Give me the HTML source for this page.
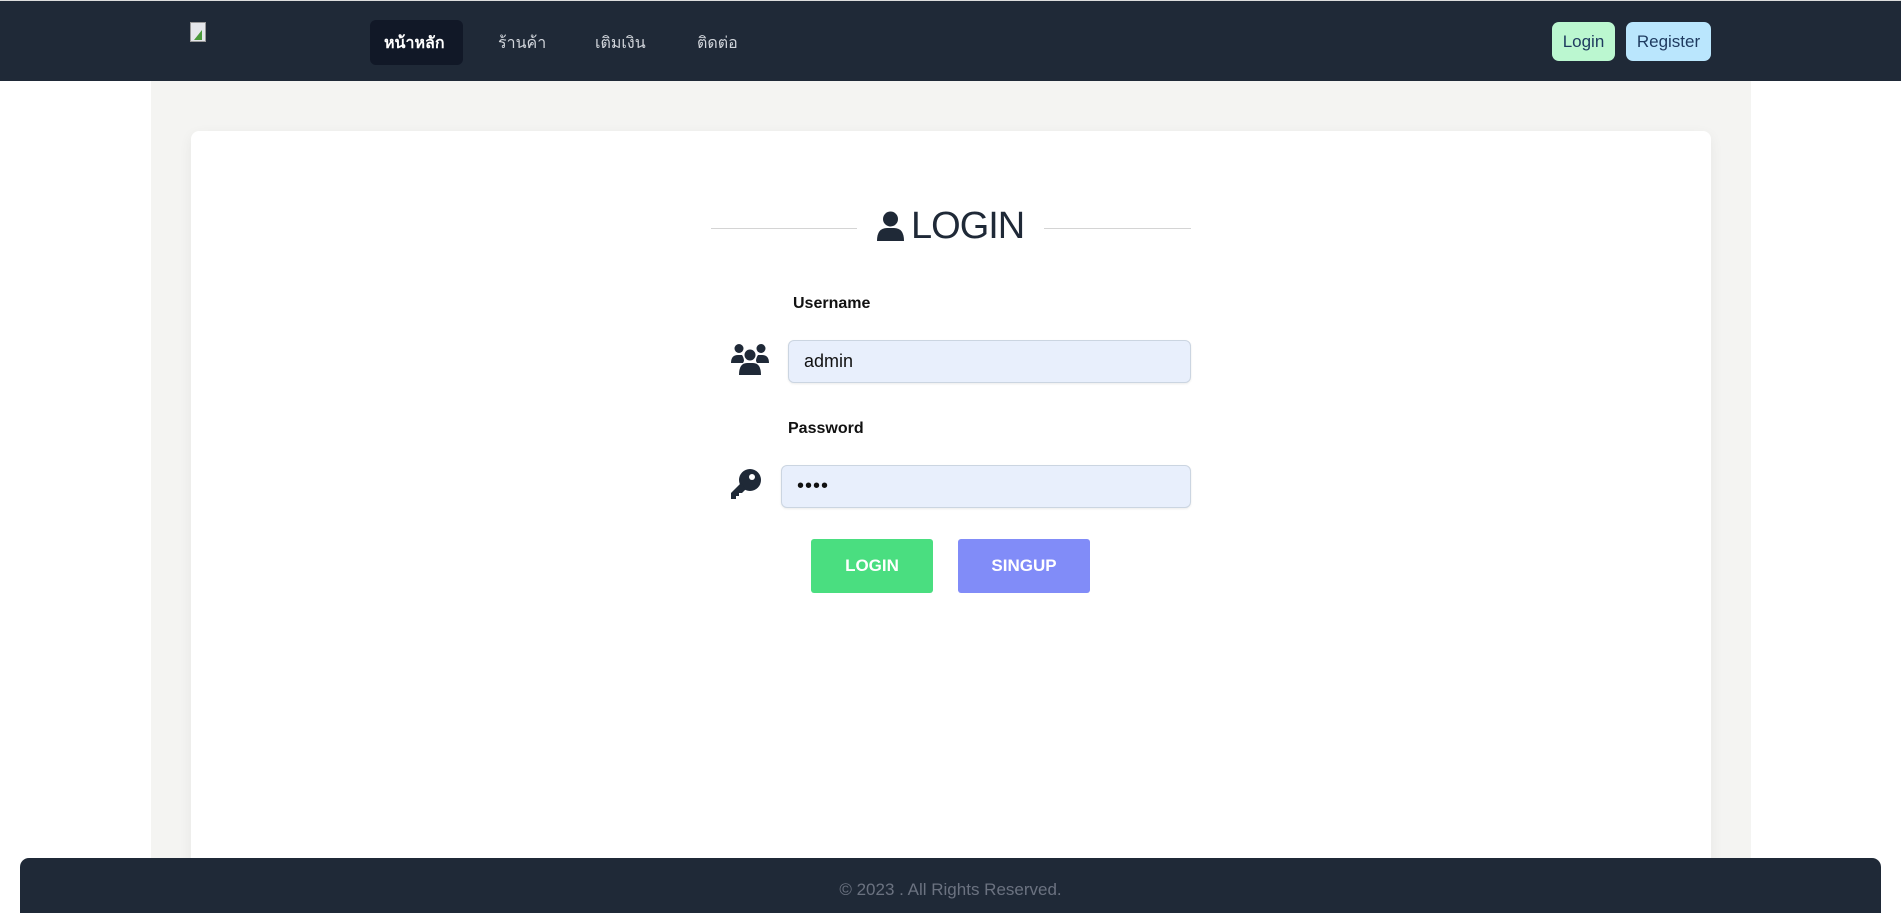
<!DOCTYPE html>
<html style="overflow:hidden;height:913px"><head><meta charset="utf-8"><style>
*{box-sizing:border-box;margin:0;padding:0}
body{width:1901px;height:913px;overflow:hidden;background:#fff;font-family:"Liberation Sans","Noto Sans CJK SC",sans-serif;position:relative}
.nav{position:absolute;left:0;top:0;width:1901px;height:81px;background:#1f2937;border-top:1px solid #ddd}
.nav a{position:absolute;color:#d1d5db;font-size:16px;text-decoration:none;top:30px}
.pill{position:absolute;left:370px;top:19px;width:93px;height:45px;background:#111827;border-radius:6px}
.btn{position:absolute;top:21px;height:39px;border-radius:7px;font-size:17px;color:#1e3a5f;text-align:center;line-height:39px}
.bg{position:absolute;left:151px;top:81px;width:1600px;height:832px;background:#f4f4f2}
.card{position:absolute;left:191px;top:131px;width:1520px;height:782px;background:#fff;border-radius:8px;box-shadow:0 4px 14px rgba(0,0,0,.06)}
.line{position:absolute;height:1px;background:#d4d4d4;top:228px}
.lbl{position:absolute;font-size:16px;font-weight:bold;color:#111}
.inp{position:absolute;height:43px;background:#e8effc;border:1px solid #cbd5e1;border-radius:6px;box-shadow:0 1px 2px rgba(0,0,0,.08);font-size:18px;line-height:41px;padding-left:15px;color:#111}
.b{position:absolute;top:539px;height:54px;border-radius:3px;color:#fff;font-weight:bold;font-size:17px;text-align:center;line-height:54px}
.foot{position:absolute;left:20px;top:858px;width:1861px;height:55px;background:#1f2937;border-radius:9px 9px 0 0;color:#6b7280;font-size:17px;text-align:center;padding-top:22px}
</style></head><body>
<div class="nav">
<svg style="position:absolute;left:190px;top:21px" width="16" height="20"><rect x="0.5" y="0.5" width="15" height="19" fill="#e5e7eb" stroke="#999"/><path d="M4 18 L12 8 L12 18Z" fill="#4a9a3a"/></svg>
<div class="pill"></div>
<a style="left:384px;color:#fff;font-weight:bold">หน้าหลัก</a>
<a style="left:498px">ร้านค้า</a>
<a style="left:595px">เติมเงิน</a>
<a style="left:697px">ติดต่อ</a>
<div class="btn" style="left:1552px;width:63px;background:#bbf7d0">Login</div>
<div class="btn" style="left:1626px;width:85px;background:#bae6fd">Register</div>
</div>
<div class="bg"></div>
<div class="card"></div>
<div class="line" style="left:711px;width:146px"></div>
<div class="line" style="left:1044px;width:147px"></div>
<svg style="position:absolute;left:877px;top:211px" width="27" height="30" viewBox="0 0 27 30"><circle cx="13.5" cy="8" r="7.5" fill="#1f2937"/><path d="M0 30 Q0 17 10 17 H17 Q27 17 27 30Z" fill="#1f2937"/></svg>
<div style="position:absolute;left:911px;top:205px;font-size:38px;color:#1f2937;letter-spacing:-1px">LOGIN</div>
<div class="lbl" style="left:793px;top:295px">Username</div>
<svg style="position:absolute;left:731px;top:344px" width="38" height="31" viewBox="0 0 38 31" fill="#1f2937"><circle cx="8" cy="4.5" r="4.5"/><circle cx="30" cy="4.5" r="4.5"/><circle cx="19" cy="11" r="5.5"/><path d="M0 19 Q0 11 7 11 H11 Q13 14 13 17 L12 19Z M38 19 Q38 11 31 11 H27 Q25 14 25 17 L26 19Z M8 31 Q8 19 16 19 H22 Q30 19 30 31Z"/></svg>
<div class="inp" style="left:788px;top:340px;width:403px">admin</div>
<div class="lbl" style="left:788px;top:420px">Password</div>
<svg style="position:absolute;left:730px;top:469px" width="31" height="31" viewBox="0 0 31 31" fill="#1f2937"><circle cx="20" cy="11" r="11"/><circle cx="22" cy="8" r="3" fill="#fff"/><path d="M11 14 L1 24 V30 H6 V27 H9 V24 H12 L16 20Z"/></svg>
<div class="inp" style="left:781px;top:465px;width:410px;font-size:20px;letter-spacing:1px">••••</div>
<div class="b" style="left:811px;width:122px;background:#4ade80">LOGIN</div>
<div class="b" style="left:958px;width:132px;background:#818cf8">SINGUP</div>
<div class="foot">© 2023 . All Rights Reserved.</div>
</body></html>
